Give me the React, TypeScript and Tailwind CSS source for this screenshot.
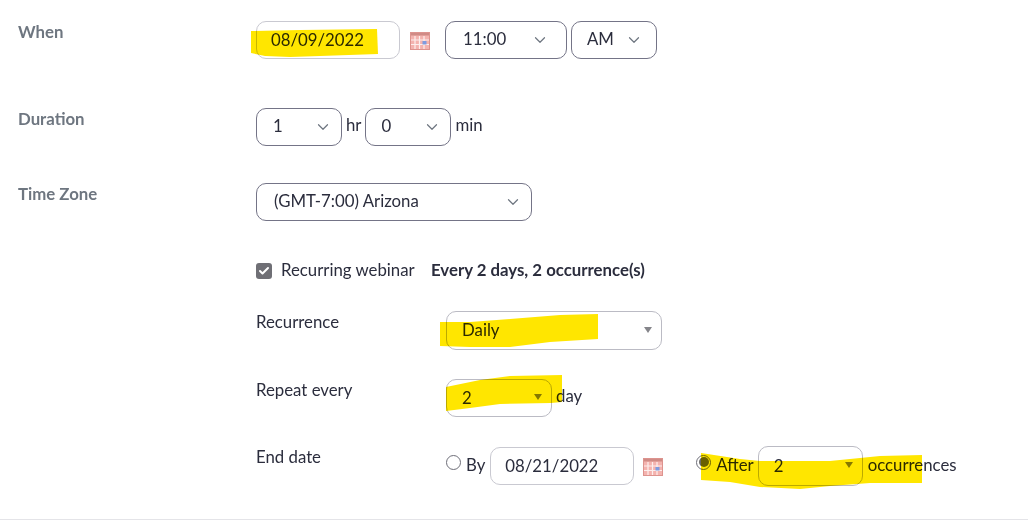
import { ChevronDown, Check } from 'lucide-react';

function Picker({ value, className }: { value: string; className: string }) {
    return (
        <div className={`h-[38px] flex items-center justify-between border border-[#747487] rounded-[10px] bg-white shrink-0 ${className}`}>
            <span className="-mt-[2px]">{value}</span>
            <ChevronDown className="w-[18px] h-[18px] text-[#6e7680]" strokeWidth={1.6} />
        </div>
    );
}

function NativeSelect({ value, className }: { value: string; className: string }) {
    return (
        <div className={`flex items-center justify-between border border-[#bbbbc4] rounded-[10px] bg-white shrink-0 ${className}`}>
            <span className="-mt-[1px]">{value}</span>
            <span className="-mt-[2px] w-0 h-0 border-x-[4px] border-x-transparent border-t-[6px] border-t-[#85858a]" />
        </div>
    );
}

function DateInput({ value, className }: { value: string; className: string }) {
    return (
        <div className={`h-[38px] flex items-center border border-[#c9c9d1] rounded-[10px] bg-white shrink-0 ${className}`}>
            <span className="-mt-[1px]">{value}</span>
        </div>
    );
}

function CalendarIcon({ className }: { className: string }) {
    return (
        <svg viewBox="0 0 20 18" className={`w-5 h-[18px] shrink-0 ${className}`}>
            <rect x="0.5" y="0.5" width="19" height="17" fill="#f4b3af" stroke="#dd938e" />
            <rect x="1" y="1" width="18" height="2.500" fill="#d08b86" />
            <path d="M5 4v13M9.500 4v13M14 4v13M1 8h18M1 12.500h18" stroke="#fdeeed" strokeWidth="1.200" />
            <rect x="12.500" y="9" width="4" height="3.500" fill="#7f9be0" />
        </svg>
    );
}

function Radio({ on }: { on?: boolean }) {
    return (
        <span className="w-[15px] h-[15px] rounded-full border border-[#6e6e78] bg-white flex items-center justify-center shrink-0 -mt-[8px]">
            {on && <span className="w-[10px] h-[10px] rounded-full bg-[#6a6a6a]" />}
        </span>
    );
}

function Highlights() {
    return (
        <svg className="absolute inset-0 w-full h-full pointer-events-none mix-blend-multiply" viewBox="0 0 1028 521">
            <g fill="#ffe600">
                <path d="M251 31 L300 30 L377 29 L378 54 L320 56 L290 57 L265 56 L251 53Z" />
                <path d="M440 322 L470 322 L510 319 L560 315 L598 314 L598 339 L550 342 L510 347 L470 347 L440 346Z" />
                <path d="M446 387 L480 380 L510 376 L562 375 L562 402 L551 403 L500 404 L470 408 L446 411Z" />
                <path d="M701 453 L740 459 L760 461 L830 461 L880 456 L922 455 L922 483 L870 483 L830 486 L800 489 L760 487 L730 482 L701 480Z" />
            </g>
        </svg>
    );
}

export default function App() {
    return (
        <div className="relative w-[1028px] h-[521px] overflow-hidden bg-white text-[#2b2d3d] text-[16.800px] font-['Lato','Liberation_Sans',sans-serif]">
            <div className="h-[520px] pl-[18px] pt-[21px] border-b border-[#e4e4e8] flex flex-col">
                <div className="flex items-start h-[87px]">
                    <div className="w-[238px] font-bold text-[#6e7680] leading-[22px]">When</div>
                    <DateInput value="08/09/2022" className="w-[144px] pl-[14px]" />
                    <CalendarIcon className="ml-[10px] mt-[11px]" />
                    <Picker value="11:00" className="w-[122px] pl-[17px] pr-[17px] ml-[15px]" />
                    <Picker value="AM" className="w-[86px] pl-[15px] pr-[13px] ml-[4px]" />
                </div>

                <div className="flex items-start h-[75px]">
                    <div className="w-[238px] font-bold text-[#6e7680] leading-[22px]">Duration</div>
                    <Picker value="1" className="w-[86px] pl-[16px] pr-[9px]" />
                    <span className="mx-[4px] leading-[34px]">hr</span>
                    <Picker value="0" className="w-[86px] pl-[15px] pr-[9px]" />
                    <span className="ml-[4px] leading-[34px]">min</span>
                </div>

                <div className="flex items-start h-[80px]">
                    <div className="w-[238px] font-bold text-[#6e7680] leading-[22px]">Time Zone</div>
                    <Picker value="(GMT-7:00) Arizona" className="w-[276px] pl-[17px] pr-[9px]" />
                </div>

                <div className="flex items-center h-[16px]">
                    <div className="w-[238px]" />
                    <span className="w-4 h-4 rounded-[3px] bg-[#6f6f75] flex items-center justify-center">
                        <Check className="w-3 h-3 text-white" strokeWidth={4} />
                    </span>
                    <span className="ml-[9px] w-[150px] -mt-[2px]">Recurring webinar</span>
                    <span className="font-bold -mt-[2px]">Every 2 days, 2 occurrence(s)</span>
                </div>

                <div className="flex items-start mt-[32px] h-[68px]">
                    <div className="w-[238px]" />
                    <div className="w-[190px] leading-[22px]">Recurrence</div>
                    <NativeSelect value="Daily" className="w-[216px] h-[39px] pl-[15px] pr-[9px]" />
                </div>

                <div className="flex items-start h-[67px]">
                    <div className="w-[238px]" />
                    <div className="w-[190px] leading-[22px]">Repeat every</div>
                    <NativeSelect value="2" className="w-[106px] h-[38px] pl-[15px] pr-[9px]" />
                    <span className="ml-[4px] leading-[34px]">day</span>
                </div>

                <div className="flex items-start">
                    <div className="w-[238px]" />
                    <div className="w-[190px] leading-[22px]">End date</div>
                    <div className="flex items-center h-[40px]">
                        <Radio />
                        <span className="ml-[5px] mr-[5px] -mt-[2px]">By</span>
                        <DateInput value="08/21/2022" className="w-[144px] pl-[14px]" />
                        <CalendarIcon className="ml-[9px] mt-[2px]" />
                        <span className="ml-[33px] flex"><Radio on /></span>
                        <span className="ml-[5px] mr-[4px] -mt-[2px]">After</span>
                        <NativeSelect value="2" className="w-[105px] h-[40px] pl-[15px] pr-[9px]" />
                        <span className="ml-[5px] -mt-[2px]">occurrences</span>
                    </div>
                </div>
            </div>
            <Highlights />
        </div>
    );
}
